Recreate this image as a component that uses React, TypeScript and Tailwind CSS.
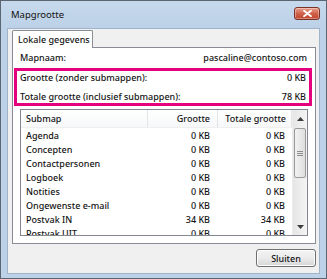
import React from "react";

const rows = [
  { name: "Agenda", size: "0 KB", total: "0 KB" },
  { name: "Concepten", size: "0 KB", total: "0 KB" },
  { name: "Contactpersonen", size: "0 KB", total: "0 KB" },
  { name: "Logboek", size: "0 KB", total: "0 KB" },
  { name: "Notities", size: "0 KB", total: "0 KB" },
  { name: "Ongewenste e-mail", size: "0 KB", total: "0 KB" },
  { name: "Postvak IN", size: "34 KB", total: "34 KB" },
  { name: "Postvak UIT", size: "0 KB", total: "0 KB" },
];

function CloseButton() {
  return (
    <div className="flex h-[13px] w-[26px] items-center justify-center rounded-[3px] border border-[#7b3226] bg-gradient-to-b from-[#e8a18f] via-[#d0614a] to-[#c0442c] shadow-[inset_0_0_0_1px_rgba(255,255,255,0.35)]">
      <svg width="9" height="7" viewBox="0 0 9 7">
        <path d="M1 0.8 L8 6.2 M8 0.8 L1 6.2" stroke="#fff" strokeWidth="1.8" strokeLinecap="round" />
      </svg>
    </div>
  );
}

function Scrollbar() {
  return (
    <div className="flex w-[15px] flex-col border-l border-[#ececec] bg-gradient-to-r from-[#e6e6e6] to-[#f4f4f4]">
      <div className="flex h-[17px] items-center justify-center">
        <svg width="7" height="4" viewBox="0 0 7 4">
          <path d="M0 4 L3.5 0 L7 4 Z" fill="#3d3d3d" />
        </svg>
      </div>
      <div className="mx-[1px] mt-[1px] flex h-[50px] items-center justify-center rounded-[2px] border border-[#9a9a9a] bg-gradient-to-r from-[#f2f2f2] to-[#dedede]">
        <div className="flex flex-col gap-[1px]">
          <div className="h-px w-[6px] bg-[#8c8c8c]" />
          <div className="h-px w-[6px] bg-[#8c8c8c]" />
          <div className="h-px w-[6px] bg-[#8c8c8c]" />
        </div>
      </div>
      <div className="flex-1" />
      <div className="flex h-[16px] items-center justify-center">
        <svg width="7" height="4" viewBox="0 0 7 4">
          <path d="M0 0 L3.5 4 L7 0 Z" fill="#3d3d3d" />
        </svg>
      </div>
    </div>
  );
}

export default function App() {
  return (
    <div
      className="flex h-[279px] w-[327px] flex-col border border-[#5c6673] bg-[#bdd2e8] text-[9px] font-medium leading-none text-[#141414]"
      style={{ fontFamily: '"Noto Sans", "Open Sans", sans-serif' }}
    >
      {/* Title bar */}
      <div className="flex h-[27px] items-center justify-between bg-gradient-to-b from-[#c6d9ec] to-[#bcd1e8] pl-[10px] pr-[6px]">
        <span className="text-[9.5px] font-normal text-[#111]">Mapgrootte</span>
        <div className="-mt-[2px]">
          <CloseButton />
        </div>
      </div>

      {/* Client area */}
      <div className="mx-[6px] mb-[4px] flex flex-1 flex-col border border-[#9fb3c9] bg-[#f0f0f0] pl-[4px] pr-[3px] pt-[1px]">
        {/* Tabs */}
        <div className="relative z-10 flex h-[18px]">
          <div className="flex h-[18px] w-[81px] items-center rounded-t-[2px] border border-b-0 border-[#898c95] bg-white pl-[5px]">
            Lokale gegevens
          </div>
        </div>

        {/* Panel */}
        <div className="-mt-px flex h-[197px] w-[304px] flex-col border border-[#898c95] bg-white">
          <div className="mt-[2px] flex h-[14px] items-center justify-between pl-[7px] pr-[8px]">
            <span>Mapnaam:</span>
            <span>pascaline@contoso.com</span>
          </div>

          <div className="ml-[1px] mt-[4px] flex w-[298px] flex-col gap-[6px] border-[3px] border-[#e5007e] pl-[3px] pr-[3px]">
            <div className="flex h-[13px] items-center justify-between">
              <span>Grootte (zonder submappen):</span>
              <span>0 KB</span>
            </div>
            <div className="flex h-[13px] items-center justify-between">
              <span>Totale grootte (inclusief submappen):</span>
              <span>78 KB</span>
            </div>
          </div>

          {/* List view */}
          <div className="ml-[7px] mt-[3px] flex h-[127px] w-[288px] overflow-hidden border border-[#828790] bg-white">
            <div className="flex flex-1 flex-col overflow-hidden">
              <div className="grid h-[18px] shrink-0 grid-cols-[127px_70px_74px] border-b border-[#efefef] bg-gradient-to-b from-white to-[#f7f8fa]">
                <div className="flex items-center border-r border-[#e3e4e6] pl-[5px]">Submap</div>
                <div className="flex items-center justify-end border-r border-[#e3e4e6] pr-[7px]">Grootte</div>
                <div className="flex items-center justify-end border-r border-[#e3e4e6] pr-[5px]">Totale grootte</div>
              </div>
              {rows.map((r) => (
                <div key={r.name} className="grid h-[14px] shrink-0 grid-cols-[127px_70px_74px]">
                  <div className="flex items-center pl-[5px]">{r.name}</div>
                  <div className="flex items-center justify-end pr-[8px]">{r.size}</div>
                  <div className="flex items-center justify-end pr-[7px]">{r.total}</div>
                </div>
              ))}
            </div>
            <Scrollbar />
          </div>
        </div>

        {/* Buttons */}
        <div className="mt-[5px] flex justify-end">
          <button className="flex h-[18px] w-[60px] items-center justify-center rounded-[3px] border border-[#707070] bg-gradient-to-b from-[#f3f3f3] via-[#ebebeb] to-[#d6d6d6] text-[#111] shadow-[inset_0_0_0_1px_#fcfcfc]">
            Sluiten
          </button>
        </div>
      </div>
    </div>
  );
}
